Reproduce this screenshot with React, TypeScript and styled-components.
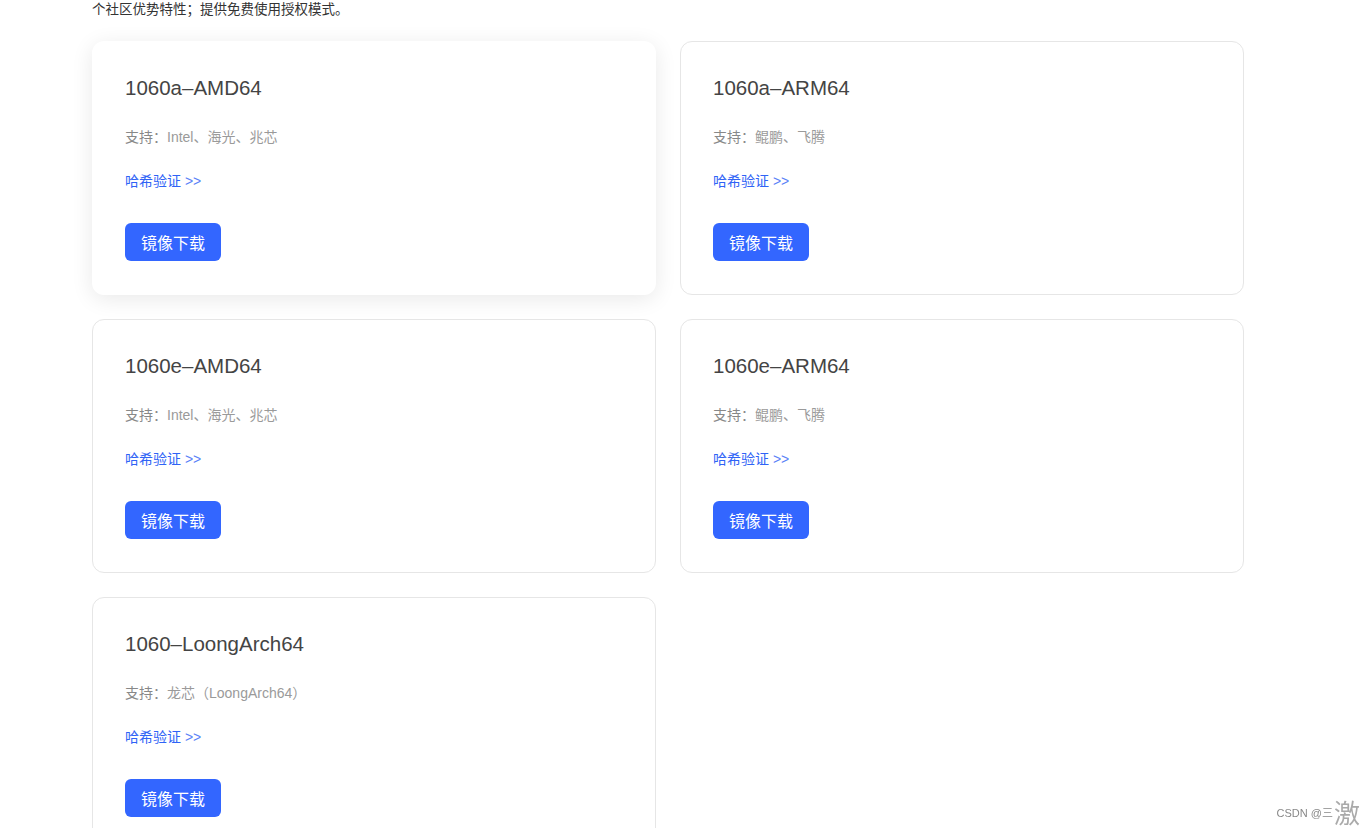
import styled, { createGlobalStyle } from "styled-components";

type Item = {
  id: number;
  title: string;
  support: string;
  hover?: boolean;
};

const items: Item[] = [
  { id: 1, title: "1060a–AMD64", support: "Intel、海光、兆芯", hover: true },
  { id: 2, title: "1060a–ARM64", support: "鲲鹏、飞腾" },
  { id: 3, title: "1060e–AMD64", support: "Intel、海光、兆芯" },
  { id: 4, title: "1060e–ARM64", support: "鲲鹏、飞腾" },
  { id: 5, title: "1060–LoongArch64", support: "龙芯（LoongArch64）" },
];

const GlobalStyle = createGlobalStyle`
  html, body {
    margin: 0;
    padding: 0;
    background: #fff;
    overflow: hidden;
    font-family: "Liberation Sans", "Noto Sans CJK SC", sans-serif;
  }
`;

const App = () => {
  return (
    <>
      <GlobalStyle />
      <Page>
        <Intro>个社区优势特性；提供免费使用授权模式。</Intro>
        <Grid>
          {items.map((item) => (
            <Card key={item.id} $hover={item.hover}>
              <Title>{item.title}</Title>
              <Support>
                支持：<span className="val">{item.support}</span>
              </Support>
              <HashLink href="#">
                哈希验证 <span className="arrow">&gt;&gt;</span>
              </HashLink>
              <DownloadButton>镜像下载</DownloadButton>
            </Card>
          ))}
        </Grid>
      </Page>
      <Watermark>
        <span className="small">CSDN @三</span>
        <span className="big">激</span>
      </Watermark>
    </>
  );
};

export default App;

const Page = styled.div`
  width: 1152px;
  margin-left: 92px;
  height: 828px;
`;

const Intro = styled.p`
  margin: 0;
  font-size: 13.5px;
  line-height: 20px;
  color: #333;
`;

const Grid = styled.div`
  display: grid;
  grid-template-columns: 564px 564px;
  gap: 24px;
  margin-top: 21px;
`;

const Card = styled.div<{ $hover?: boolean }>`
  box-sizing: border-box;
  height: 254px;
  padding: 32px 32px 33px;
  border-radius: 12px;
  background: #fff;
  border: 1px solid ${(p) => (p.$hover ? "transparent" : "#e6e6e6")};
  box-shadow: ${(p) => (p.$hover ? "0 4px 22px rgba(0, 0, 0, 0.09)" : "none")};
  display: flex;
  flex-direction: column;
  align-items: flex-start;
`;

const Title = styled.h3`
  margin: 0;
  font-size: 20.5px;
  line-height: 28px;
  font-weight: 400;
  color: #444;
`;

const Support = styled.div`
  margin-top: 25px;
  font-size: 14px;
  line-height: 20px;
  color: #888;

  .val {
    color: #9a9a9a;
  }
`;

const HashLink = styled.a`
  margin-top: 24px;
  font-size: 14px;
  line-height: 20px;
  color: #2f63f6;
  text-decoration: none;

  .arrow {
    color: #5a82f7;
  }
`;

const DownloadButton = styled.button`
  margin-top: 32px;
  width: 96px;
  height: 40px;
  border: none;
  border-radius: 6px;
  background: #3366ff;
  color: #fff;
  font-family: "Noto Sans CJK SC", sans-serif;
  font-size: 16px;
  cursor: pointer;
`;

const Watermark = styled.div`
  position: fixed;
  right: 0;
  bottom: 2px;
  display: flex;
  align-items: flex-end;
  gap: 1px;
  pointer-events: none;

  .small {
    font-size: 11px;
    color: #888;
    margin-bottom: 6px;
  }

  .big {
    font-family: "Noto Sans CJK SC", sans-serif;
    font-size: 26px;
    line-height: 28px;
    color: #aaa;
  }
`;
